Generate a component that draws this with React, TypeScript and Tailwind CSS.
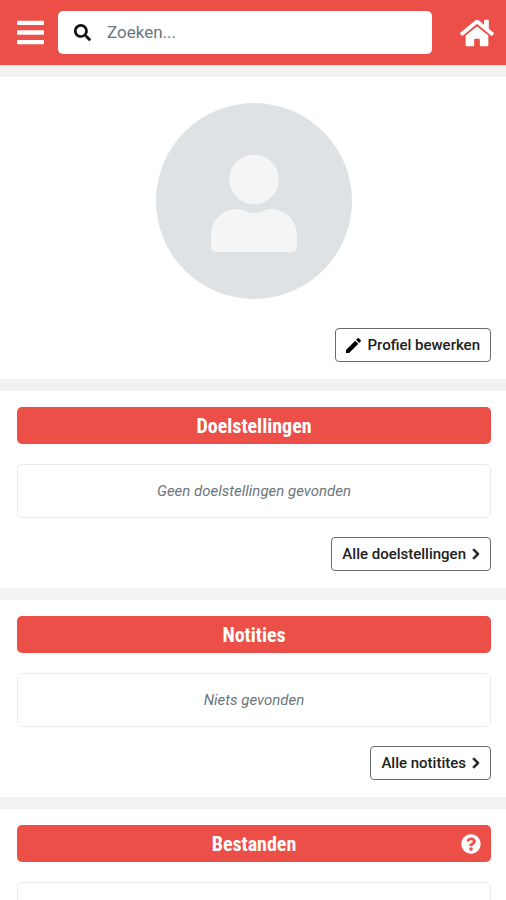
import React, { useState } from 'react';
import { FaBars, FaChevronRight, FaHome, FaQuestionCircle, FaSearch } from 'react-icons/fa';
import { MdEdit } from 'react-icons/md';

interface SectionProps {
  title: string;
  emptyText: string;
  buttonLabel: string;
  hasHelp?: boolean;
}

const Avatar: React.FC = () => (
  <svg viewBox="0 0 196 196" className="mx-auto h-[196px] w-[196px]" role="img" aria-label="Profielfoto">
    <circle cx="98" cy="98" r="98" fill="#dee2e5" />
    <g fill="#f5f5f5">
      <circle cx="98" cy="76.5" r="24.8" />
      <path d="M55 133C55 117 66.500 106 82 106C88 106 90 110 98 110C106 110 108 106 114 106C129.500 106 141 117 141 133V143Q141 149 135 149H61Q55 149 55 143Z" />
    </g>
  </svg>
);

const OutlineButton: React.FC<{ children: React.ReactNode }> = ({ children }) => (
  <button
    type="button"
    className="flex h-[34px] items-center gap-[6px] rounded border border-[#6b6b6b] bg-white px-[10px] text-[15px] font-medium text-[#212121]"
  >
    {children}
  </button>
);

const Section: React.FC<SectionProps> = ({ title, emptyText, buttonLabel, hasHelp }) => (
  <section className="bg-white pt-4 pr-[15px] pb-[17px] pl-[17px]">
    <div className="relative flex h-[37px] items-center justify-center rounded-[5px] bg-[#eb4f47] text-white">
      <h2 className="font-['Roboto_Condensed','Roboto',sans-serif] text-[20px] font-bold">{title}</h2>
      {hasHelp && (
        <button type="button" aria-label="Help" className="absolute right-[10px]">
          <FaQuestionCircle size={20} />
        </button>
      )}
    </div>
    <div className="mt-5 flex h-[54px] items-center justify-center rounded-[5px] border border-[#e9ebed]">
      <p className="text-[15px] text-[#6c757d] italic">{emptyText}</p>
    </div>
    <div className="mt-[19px] flex justify-end">
      <OutlineButton>
        {buttonLabel}
        <FaChevronRight className="h-3 w-2 stroke-current stroke-[36]" />
      </OutlineButton>
    </div>
  </section>
);

const App: React.FC = () => {
  const [searchTerm, setSearchTerm] = useState('');

  return (
    <div className="flex min-h-screen flex-col gap-3 bg-[#f2f2f2] font-['Roboto',sans-serif]">
      {/* Header */}
      <header className="flex h-[65px] shrink-0 items-center bg-[#eb4f47] pr-3 pl-[17px] text-white">
        <button type="button" aria-label="Menu">
          <FaBars className="h-[31px] w-[27px]" />
        </button>
        <label className="ml-[14px] flex h-[43px] flex-1 items-center rounded-[5px] bg-white pl-4">
          <FaSearch size={17} className="text-[#111111]" />
          <input
            type="text"
            aria-label="Zoeken"
            placeholder="Zoeken..."
            value={searchTerm}
            onChange={(e) => setSearchTerm(e.target.value)}
            className="ml-4 min-w-0 flex-1 text-[17px] text-[#212121] outline-none placeholder:text-[#6c757d]"
          />
        </label>
        <a href="#" aria-label="Home" className="ml-7">
          <FaHome size={34} />
        </a>
      </header>

      {/* Profile */}
      <section className="shrink-0 bg-white pt-[26px] pr-[15px] pb-[17px] pl-[17px]">
        <Avatar />
        <div className="mt-[29px] flex justify-end">
          <OutlineButton>
            <MdEdit viewBox="3 3 18 18" size={15} className="text-black" />
            Profiel bewerken
          </OutlineButton>
        </div>
      </section>

      <Section title="Doelstellingen" emptyText="Geen doelstellingen gevonden" buttonLabel="Alle doelstellingen" />
      <Section title="Notities" emptyText="Niets gevonden" buttonLabel="Alle notitites" />
      <Section title="Bestanden" emptyText="Niets gevonden" buttonLabel="Alle bestanden" hasHelp />
    </div>
  );
};

export default App;
